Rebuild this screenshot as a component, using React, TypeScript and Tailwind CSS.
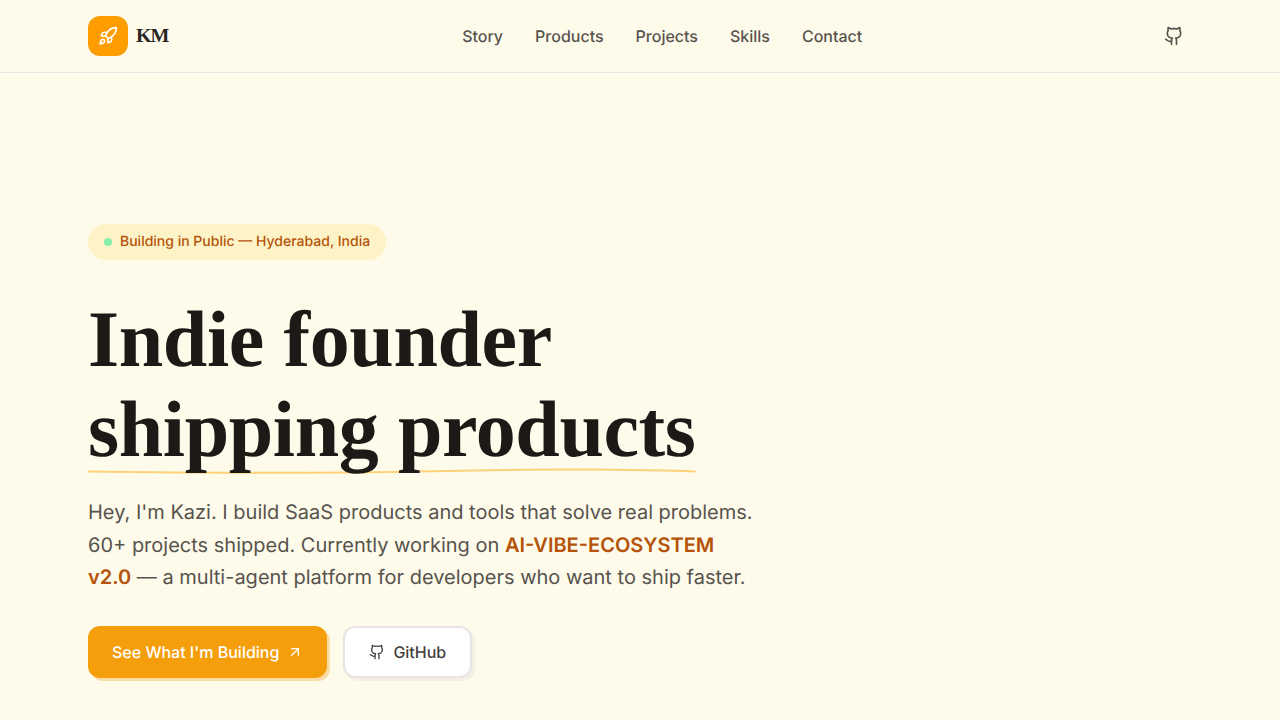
import { ArrowUpRight, Github, Rocket } from "lucide-react";

const navLinks = ["Story", "Products", "Projects", "Skills", "Contact"];

export default function App() {
  return (
    <div className="h-[720px] overflow-hidden bg-[#fffbeb] font-['Inter',sans-serif] [text-rendering:geometricPrecision]">
      {/* Header */}
      <header className="flex h-[73px] items-center justify-between border-b border-[#e7e5e4] px-[88px]">
        <div className="flex items-center gap-2">
          <div className="flex h-10 w-10 items-center justify-center rounded-xl bg-[#ff9d00]">
            <Rocket size={20} className="text-white" />
          </div>
          <span className="font-['Liberation_Serif',serif] text-xl font-bold tracking-[-1px] text-[#292524]">KM</span>
        </div>

        <nav className="flex items-center gap-8">
          {navLinks.map((link) => (
            <a key={link} className="text-base font-medium text-[#57534e]">
              {link}
            </a>
          ))}
        </nav>

        <button className="p-2 text-[#57534e]">
          <Github size={20} />
        </button>
      </header>

      {/* Hero */}
      <section className="px-[88px] pt-[151px]">
        <div className="inline-flex items-center gap-2 rounded-full bg-[#fef3c7] px-4 py-2 text-sm font-medium text-[#b45309]">
          <span className="h-2 w-2 rounded-full bg-[#86efac]" />
          Building in Public — Hyderabad, India
        </div>

        <h1 className="mt-[35px] font-['Liberation_Serif',serif] text-[80px] leading-[90px] font-bold tracking-[-0.4px] text-[#1c1917]">
          Indie founder
          <br />
          <span className="relative isolate inline-block">
            shipping products
            <svg className="absolute -bottom-[1px] left-0 -z-10 h-2 w-full" viewBox="0 0 607 8" preserveAspectRatio="none" fill="none">
              <path d="M0 3.5C70 4.5 150 5.5 260 4.5C340 3.5 420 1 500 1.5C560 2 600 3 607 3.5" stroke="#fcd27a" strokeWidth="2" />
            </svg>
          </span>
        </h1>

        <p className="mt-[21px] max-w-[672px] text-xl leading-[32.5px] text-[#57534e]">
          Hey, I'm Kazi. I build SaaS products and tools that solve real problems. 60+ projects shipped. Currently working on{" "}
          <span className="font-semibold text-[#b45309]">AI-VIBE-ECOSYSTEM v2.0</span> — a multi-agent platform for developers who want to ship faster.
        </p>

        <div className="mt-8 flex items-center gap-4">
          <a className="flex h-[52px] items-center gap-2 rounded-xl bg-[#f59e0b] px-6 text-base font-medium text-white shadow-[3px_3px_0_#fbdba6]">
            See What I'm Building
            <ArrowUpRight size={16} />
          </a>
          <a className="flex h-[52px] items-center gap-2 rounded-xl border-2 border-[#e7e5e4] bg-white px-6 text-base font-medium text-[#44403c] shadow-[3px_3px_0_#f3efe3]">
            <Github size={16} />
            GitHub
          </a>
        </div>
      </section>
    </div>
  );
}
